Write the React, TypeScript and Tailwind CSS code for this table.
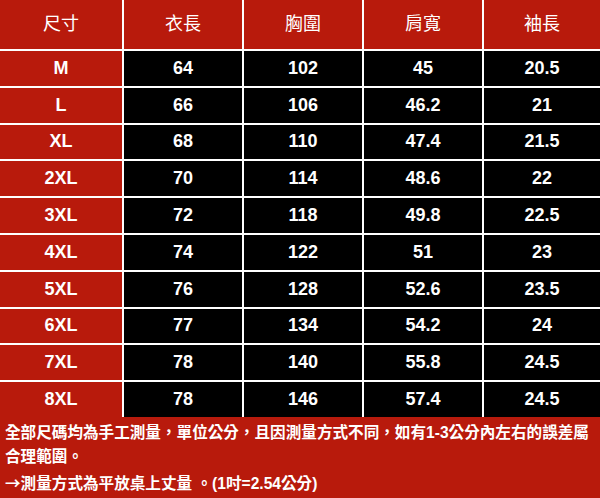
import React from 'react';

const rows: [string, string, string, string, string][] = [
  ['M', '64', '102', '45', '20.5'],
  ['L', '66', '106', '46.2', '21'],
  ['XL', '68', '110', '47.4', '21.5'],
  ['2XL', '70', '114', '48.6', '22'],
  ['3XL', '72', '118', '49.8', '22.5'],
  ['4XL', '74', '122', '51', '23'],
  ['5XL', '76', '128', '52.6', '23.5'],
  ['6XL', '77', '134', '54.2', '24'],
  ['7XL', '78', '140', '55.8', '24.5'],
  ['8XL', '78', '146', '57.4', '24.5'],
];

const headers = ['尺寸', '衣長', '胸圍', '肩寬', '袖長'];

const font = { fontFamily: '"Liberation Sans", "Noto Sans CJK TC", sans-serif' };

export default function App() {
  return (
    <div className="w-[600px] h-[498px] bg-[#b81a0c] text-white overflow-hidden" style={font}>
      <div className="grid grid-cols-[122px_118px_118px_118px_116px] gap-[2px] bg-white">
        {headers.map((h) => (
          <div key={h} className="h-[49px] bg-[#b81a0c] flex items-center justify-center text-[18px]">
            {h}
          </div>
        ))}
        {rows.map((r) =>
          r.map((v, i) => (
            <div
              key={r[0] + i}
              className={`h-[34.8px] flex items-center justify-center text-[18px] font-bold ${
                i === 0 ? 'bg-[#b81a0c]' : 'bg-black'
              }`}
            >
              {v}
            </div>
          ))
        )}
      </div>
      <div className="px-[5px] pt-[4px] text-[15.6px] leading-[24.5px] font-semibold">
        <p>全部尺碼均為手工測量，單位公分，且因測量方式不同，如有1-3公分內左右的誤差屬合理範圍。</p>
        <p>
          <span className="font-['Noto_Sans_CJK_TC']">→</span>測量方式為平放桌上丈量 。(1吋=2.54公分)
        </p>
      </div>
    </div>
  );
}
